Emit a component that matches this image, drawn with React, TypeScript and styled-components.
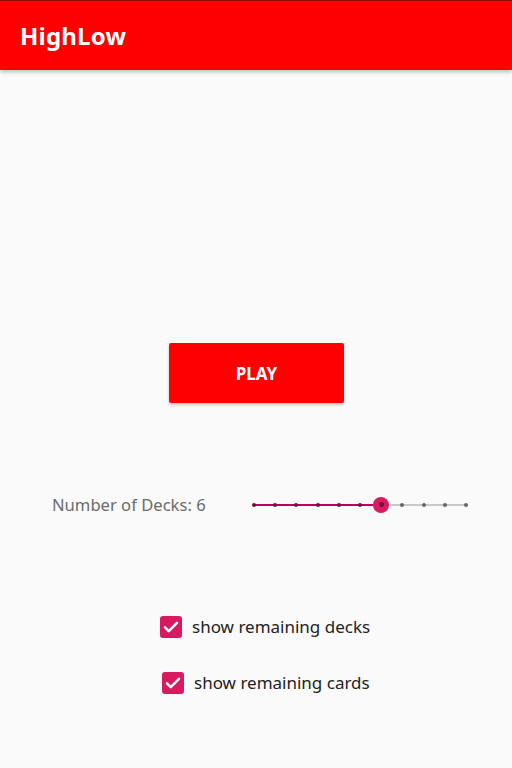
import styled, { createGlobalStyle } from "styled-components";

const GlobalStyle = createGlobalStyle`
  html, body {
    margin: 0;
    padding: 0;
    background: #fafafa;
    font-family: "Noto Sans", "Open Sans", sans-serif;
  }
`;

const Screen = styled.div`
  width: 512px;
  height: 768px;
  display: flex;
  flex-direction: column;
  background: #fafafa;
  overflow: hidden;
`;

const AppBar = styled.header`
  height: 69px;
  border-top: 1px solid #8e0a0a;
  background: #ff0000;
  display: flex;
  align-items: center;
  padding: 0 20px;
  box-shadow: 0 2px 4px rgba(0, 0, 0, 0.25);
  z-index: 1;
`;

const Title = styled.h1`
  margin: 0;
  color: #fff;
  font-size: 24px;
  font-weight: 700;
  letter-spacing: 0.2px;
`;

const Content = styled.main`
  flex: 1;
  display: flex;
  flex-direction: column;
  align-items: center;
  padding-top: 273px;
`;

const PlayButton = styled.button`
  width: 175px;
  height: 60px;
  border: none;
  border-radius: 2px;
  background: #ff0000;
  color: #fff;
  font-family: inherit;
  font-size: 17px;
  font-weight: 700;
  box-shadow: 0 2px 3px rgba(0, 0, 0, 0.2);
  margin-left: 1px;
`;

const DeckRow = styled.div`
  margin-top: 90px;
  width: 100%;
  display: flex;
  align-items: center;
  padding-left: 52px;
  box-sizing: border-box;
`;

const DeckLabel = styled.span`
  width: 202px;
  font-size: 16.6px;
  color: #6b6b6b;
`;

const SliderWrap = styled.div`
  position: relative;
  width: 212px;
  height: 20px;
`;

const Track = styled.div<{ $color: string }>`
  position: absolute;
  top: 9px;
  height: 2px;
  background: ${(p) => p.$color};
`;

const Tick = styled.div<{ $active: boolean }>`
  position: absolute;
  top: 8px;
  width: 4px;
  height: 4px;
  margin-left: -2px;
  border-radius: 50%;
  background: ${(p) => (p.$active ? "#6d0f37" : "#666")};
`;

const Thumb = styled.div`
  position: absolute;
  top: 2px;
  width: 16px;
  height: 16px;
  margin-left: -8px;
  border-radius: 50%;
  background: #d81b60;
  display: flex;
  align-items: center;
  justify-content: center;
  &::after {
    content: "";
    width: 5px;
    height: 5px;
    border-radius: 50%;
    background: #6d0f37;
  }
`;

const CheckList = styled.div`
  align-self: flex-start;
  margin-top: 99px;
  margin-left: 160px;
  display: flex;
  flex-direction: column;
  gap: 33px;
`;

const CheckRow = styled.label<{ $shift: number }>`
  display: flex;
  align-items: center;
  gap: 10px;
  margin-left: ${(p) => p.$shift}px;
  font-size: 17px;
  color: #222;
`;

const Box = styled.span`
  width: 22px;
  height: 22px;
  border-radius: 3px;
  background: #d81b60;
  display: flex;
  align-items: center;
  justify-content: center;
`;

const Slider = ({ value, max }: { value: number; max: number }) => {
  const step = 212 / max;
  const x = value * step;
  return (
    <SliderWrap>
      <Track $color="#c8c8c8" style={{ left: x, width: 212 - x }} />
      <Track $color="#b8005f" style={{ left: 0, width: x }} />
      {Array.from({ length: max + 1 }, (_, i) =>
        i === value ? null : (
          <Tick key={i} $active={i < value} style={{ left: i * step }} />
        )
      )}
      <Thumb style={{ left: x }} />
    </SliderWrap>
  );
};

const Check = ({ label, shift }: { label: string; shift: number }) => (
  <CheckRow $shift={shift}>
    <Box>
      <svg width="18" height="18" viewBox="0 0 24 24">
        <path
          d="M4 12.5l5 5L20 6.5"
          fill="none"
          stroke="#fff"
          strokeWidth="3.2"
          strokeLinecap="round"
          strokeLinejoin="round"
        />
      </svg>
    </Box>
    {label}
  </CheckRow>
);

export default function App() {
  return (
    <>
      <GlobalStyle />
      <Screen>
        <AppBar>
          <Title>HighLow</Title>
        </AppBar>
        <Content>
          <PlayButton>PLAY</PlayButton>
          <DeckRow>
            <DeckLabel>Number of Decks: 6</DeckLabel>
            <Slider value={6} max={10} />
          </DeckRow>
          <CheckList>
            <Check label="show remaining decks" shift={0} />
            <Check label="show remaining cards" shift={2} />
          </CheckList>
        </Content>
      </Screen>
    </>
  );
}
